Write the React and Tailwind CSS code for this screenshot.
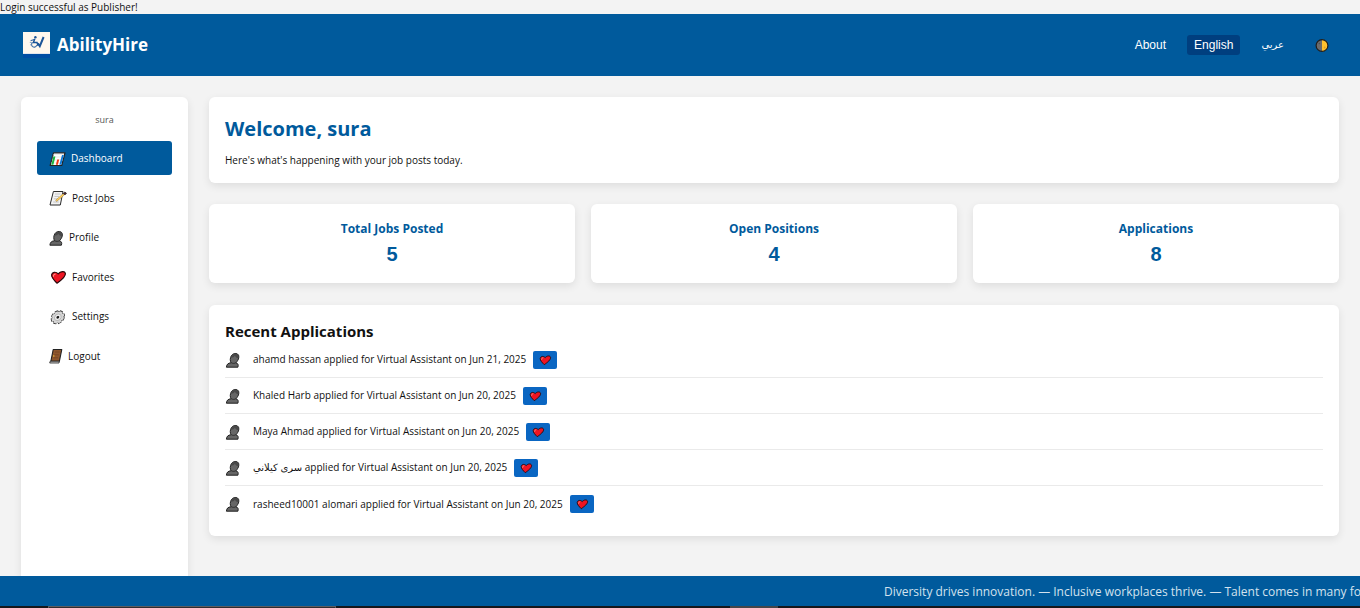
import React from "react";

function ChartIcon({ className }) {
  return (
    <svg viewBox="0 0 17 16" className={className} aria-hidden="true">
      <path d="M4.5 1.8H16L12.7 14.5H1.2Z" fill="#fff" stroke="#222" strokeWidth="1.2" strokeLinejoin="round" />
      <path d="M4.2 3.4H15M3.5 6H14.4M2.8 9H13.6M2.2 12H13" stroke="#dcdcdc" strokeWidth=".6" />
      <path d="M4.4 5.5h2L4.4 13.8H2.3Z" fill="#16b63c" />
      <path d="M8.2 8.5h2L8.9 13.8h-2Z" fill="#f03a17" />
      <path d="M13 4h1.8L12.3 13.8h-2Z" fill="#0a78d7" />
    </svg>
  );
}

function MemoIcon({ className }) {
  return (
    <svg viewBox="0 0 18 16" className={className} aria-hidden="true">
      <path d="M4.4 1.5H14L11.3 15H1Z" fill="#f3f3f3" stroke="#2b2b2b" strokeWidth="1" strokeLinejoin="round" />
      <path d="M6 4h5.5M5.4 6.4h4.6M4.8 8.8h3.4M4.2 12h5.6" stroke="#c4c4c4" strokeWidth="1" />
      <path d="M7 11L14.8 4.3" stroke="#8a7446" strokeWidth="2" />
      <path d="M7.2 10.8L14.7 4.4" stroke="#ffcf5c" strokeWidth="1.4" />
      <path d="M14.2 3.4l1.8 1.5 1.5-1.6L15.9 2Z" fill="#51242b" stroke="#222" strokeWidth=".7" />
    </svg>
  );
}

function PersonIcon({ className }) {
  return (
    <svg viewBox="0 0 15 16" className={className} aria-hidden="true">
      <path
        d="M.9 15.2C1.2 12.2 2.6 11 5.6 10.8C4.4 9 4.5 6 5.8 3.8C7.2 1.5 10 .9 12 2C14 3.2 13.6 6.6 12 8.8C11.5 9.6 11 10.2 10.4 10.8C12.4 11.3 13.2 12.6 12.4 15.2Z"
        fill="#666"
        stroke="#222"
        strokeWidth="1"
        strokeLinejoin="round"
      />
      <path d="M5.2 5.8C7.2 6 8.6 5 9.4 3.8C10.2 5.2 11.2 6 12.8 6.2C13.6 4.4 13 2.8 11.4 2C8.8 1 6 2.8 5.2 5.8Z" fill="#484848" />
      <path d="M5.8 10.8C7.2 11.6 9.2 11.5 10.3 10.8" fill="none" stroke="#292929" strokeWidth=".9" />
    </svg>
  );
}

function HeartIcon({ className }) {
  return (
    <svg viewBox="0 0 18 16" className={className} aria-hidden="true">
      <path
        d="M8 14.2C5.4 11.6 2.4 8.8 2.6 5.9C3 3 6.8 2.2 9.2 4.9C11.6 2 15.8 1.8 16.4 4.4C16.9 7.7 12.2 11.3 8 14.2Z"
        fill="#ee1422"
        stroke="#25090b"
        strokeWidth="1.2"
        strokeLinejoin="round"
      />
      <path d="M4.5 7.2C4.4 6 5 5.2 6.2 5" fill="none" stroke="#ff9a8c" strokeWidth="1.1" strokeLinecap="round" />
    </svg>
  );
}

function GearIcon({ className }) {
  return (
    <svg viewBox="0 0 18 16" className={className} aria-hidden="true">
      <g transform="matrix(1 0 -.2 1 2 0)">
        <circle cx="8.5" cy="8.3" r="6" fill="#2e2e2e" stroke="#2e2e2e" strokeWidth="2" strokeDasharray="3.1 1.61" />
        <circle cx="8.5" cy="8.3" r="5.4" fill="#d6d6d6" stroke="#d6d6d6" strokeWidth="1.6" strokeDasharray="2.5 1.74" />
        <circle cx="8.5" cy="8.3" r="5.3" fill="#d6d6d6" />
        <circle cx="8.5" cy="8.3" r="3.3" fill="#ececec" stroke="#a8a8a8" strokeWidth=".7" />
        <circle cx="8.5" cy="8.3" r="1.4" fill="#151515" />
      </g>
    </svg>
  );
}

function DoorIcon({ className }) {
  return (
    <svg viewBox="0 0 14 16" className={className} aria-hidden="true">
      <path d="M4.2 1.5h8.6L10.4 13.2H1.9Z" fill="#8e562e" stroke="#222" strokeWidth="1.1" strokeLinejoin="round" />
      <path d="M6 4h4.6M5.3 6.8h4.6M4.6 9.8h4.4" stroke="#7b4723" strokeWidth="1" />
      <circle cx="4.8" cy="8" r=".7" fill="#ffc83d" />
      <path d="M1.2 13.2h9.2l-.4 1.8H.7Z" fill="#ccc" stroke="#222" strokeWidth=".8" />
    </svg>
  );
}

function HalfMoonIcon({ className }) {
  return (
    <svg viewBox="0 0 14 14" className={className} aria-hidden="true">
      <circle cx="7" cy="7.5" r="6" fill="#6b6b6b" />
      <path d="M7 1.5A6 6 0 0 1 7 13.5Z" fill="#ffc22e" />
      <circle cx="7" cy="7.5" r="5.9" fill="none" stroke="#1d1d1d" strokeWidth="1.2" />
      <circle cx="4.4" cy="5.5" r=".8" fill="#515151" />
      <circle cx="9.7" cy="9.5" r=".9" fill="#e8a21c" />
    </svg>
  );
}

function Logo({ className }) {
  return (
    <svg viewBox="0 0 27 26" className={className} role="img" aria-label="AbilityHire logo">
      <rect width="27" height="22" fill="#fff8ee" />
      <rect y="21" width="27" height="1" fill="#e3e6ec" />
      <rect y="22" width="27" height="4" fill="#004ea3" />
      <circle cx="12.4" cy="5.2" r="1.2" fill="#1c5598" />
      <path d="M11.8 6.8l-1.4 3.6h3.6l1 3.4" fill="none" stroke="#1c5598" strokeWidth="1.5" />
      <path d="M7.6 8.6l3.6-1" stroke="#1c5598" strokeWidth="1" />
      <path d="M9.6 10.4C8.2 11.4 8.2 13.8 9.6 14.6C11.2 15.6 13.4 15 13.8 13.2" fill="none" stroke="#3c6da6" strokeWidth="1.1" />
      <path d="M14.8 11.2l2 3L20.6 5" fill="none" stroke="#1c5598" strokeWidth="2" />
      <path d="M6.8 10.4h2M7 12.8h1.6" stroke="#7b9bc2" strokeWidth=".9" />
    </svg>
  );
}

const menu = [
  { label: "Dashboard", Icon: ChartIcon, size: "w-[17px]", active: true },
  { label: "Post Jobs", Icon: MemoIcon, size: "w-[18px]" },
  { label: "Profile", Icon: PersonIcon, size: "w-[15px]" },
  { label: "Favorites", Icon: HeartIcon, size: "w-[18px]" },
  { label: "Settings", Icon: GearIcon, size: "w-[18px]" },
  { label: "Logout", Icon: DoorIcon, size: "w-[14px]" },
];

const stats = [
  { label: "Total Jobs Posted", value: 5 },
  { label: "Open Positions", value: 4 },
  { label: "Applications", value: 8 },
];

const applications = [
  { name: "ahamd hassan", date: "Jun 21, 2025" },
  { name: "Khaled Harb", date: "Jun 20, 2025" },
  { name: "Maya Ahmad", date: "Jun 20, 2025" },
  { name: "سرى كيلاني", date: "Jun 20, 2025" },
  { name: "rasheed10001 alomari", date: "Jun 20, 2025" },
];

const card = "rounded-md bg-white shadow-[0_3px_8px_rgba(0,0,0,0.09)]";

export default function App() {
  return (
    <div className="flex min-h-screen flex-col overflow-x-hidden bg-[#f3f3f3] font-['Open_Sans','DejaVu_Sans',sans-serif] text-[10px] text-[#111]">
      <p role="status" className="leading-[14px]">Login successful as Publisher!</p>

      <header className="flex h-[62px] items-center justify-between bg-[#005a9c] pr-[21px] pl-[23px] text-white">
        <div className="flex items-center gap-[7px]">
          <Logo className="h-[26px] w-[27px]" />
          <span className="text-[17px] leading-6 font-bold">AbilityHire</span>
        </div>
        <nav className="flex items-center gap-[14px] font-['Liberation_Sans','DejaVu_Sans',sans-serif] text-[12px] leading-5">
          <a href="#about" className="px-[7px]">About</a>
          <button type="button" className="rounded-[3px] bg-[#003f7f] px-[7px]">English</button>
          <button type="button" lang="ar" className="px-[7px] text-[10px]">عربي</button>
          <button type="button" aria-label="Toggle theme" className="px-[10px]">
            <HalfMoonIcon className="size-[14px]" />
          </button>
        </nav>
      </header>

      <div className="flex flex-1 gap-[21px] px-[21px] pt-[21px]">
        <aside className="w-[167px] shrink-0 rounded-t-md bg-white px-4 pt-4 shadow-[0_3px_8px_rgba(0,0,0,0.09)]">
          <p className="text-center text-[9px] leading-[14px] text-[#555]">sura</p>
          <nav className="mt-[14px] flex h-[232px] flex-col justify-between">
            {menu.map(({ label, Icon, size, active }) => (
              <a
                key={label}
                href={"#" + label.toLowerCase().replace(" ", "-")}
                aria-current={active ? "page" : undefined}
                className={"flex h-[34px] items-center gap-[5px] rounded-[3px] px-3 pt-px " + (active ? "bg-[#005a9c] text-white" : "")}
              >
                <Icon className={"h-4 shrink-0 " + size} />
                {label}
              </a>
            ))}
          </nav>
        </aside>

        <main className="flex min-w-0 flex-1 flex-col pb-10">
          <section className={"p-4 " + card}>
            <h1 className="text-[20px] leading-8 font-bold text-[#005a9c]">Welcome, sura</h1>
            <p className="mt-2 leading-[14px]">Here's what's happening with your job posts today.</p>
          </section>

          <section className="mt-[21px] grid grid-cols-3 gap-4">
            {stats.map(({ label, value }) => (
              <div key={label} className={"p-4 text-center text-[#005a9c] " + card}>
                <h2 className="text-[12px] leading-[18px] font-bold">{label}</h2>
                <p className="mt-1 font-['Liberation_Sans',sans-serif] text-[20px] leading-[25px] font-bold">{value}</p>
              </div>
            ))}
          </section>

          <section className={"mt-[22px] px-4 pt-4 pb-[14px] " + card}>
            <h2 className="text-[15px] leading-[21px] font-bold">Recent Applications</h2>
            <ul>
              {applications.map(({ name, date }) => (
                <li key={name} className="flex h-9 items-center border-b border-[#eaeaea] last:border-0">
                  <PersonIcon className="h-4 w-4 shrink-0" />
                  <span className="ml-3">
                    <bdi>{name}</bdi> applied for Virtual Assistant on {date}
                  </span>
                  <button type="button" aria-label={"Favorite " + name} className="ml-[7px] flex h-[18px] w-6 items-center justify-center rounded-[2px] bg-[#0a66c2]">
                    <HeartIcon className="h-3 w-[14px]" />
                  </button>
                </li>
              ))}
            </ul>
          </section>
        </main>
      </div>

      <footer>
        <div className="h-[30px] overflow-hidden bg-[#005a9c] pl-[65%] text-[12px] leading-8 whitespace-nowrap text-[#d3e2ee]">
          Diversity drives innovation. — Inclusive workplaces thrive. — Talent comes in many forms.
        </div>
        <div className="flex h-[2px] bg-[#16171b] pl-12">
          <div className="h-full w-72 border border-b-0 border-[#5c5c60] bg-[#302c30]" />
          <div className="ml-[30%] h-full w-12 bg-[#45464a]" />
        </div>
      </footer>
    </div>
  );
}
